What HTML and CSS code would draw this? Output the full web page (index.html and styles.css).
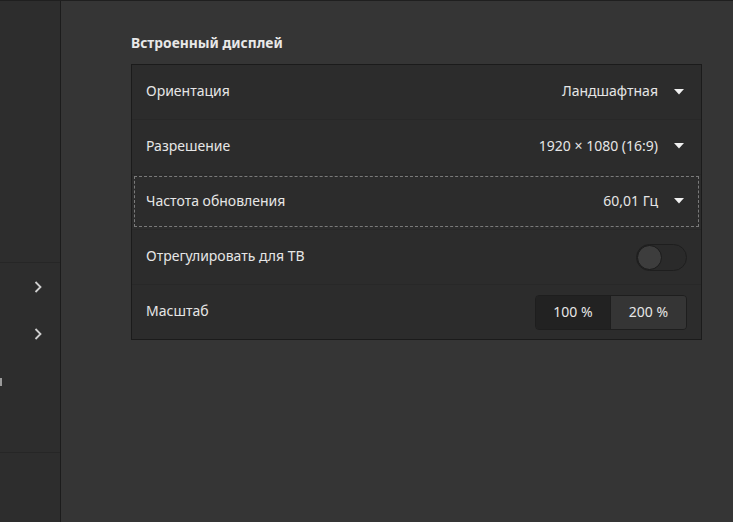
FILE: index.html
```html
<!DOCTYPE html>
<html lang="ru">
<head>
<meta charset="utf-8">
<link rel="stylesheet" href="styles.css">
</head>
<body>
<div class="window">
  <aside class="sidebar">
    <div class="side-top"></div>
    <div class="side-item"><svg class="chev" width="10" height="14" viewBox="0 0 10 14"><path d="M2.5 2 L7.5 7 L2.5 12" fill="none" stroke="#d0d0d0" stroke-width="1.8"/></svg></div>
    <div class="side-item"><svg class="chev" width="10" height="14" viewBox="0 0 10 14"><path d="M2.5 2 L7.5 7 L2.5 12" fill="none" stroke="#d0d0d0" stroke-width="1.8"/></svg></div>
    <div class="side-item short"><span class="sliver"></span></div>
    <div class="side-fill"></div>
    <div class="side-bottom"></div>
  </aside>
  <main class="main">
    <h2 class="heading">Встроенный дисплей</h2>
    <div class="card">
      <div class="row">
        <span class="label">Ориентация</span>
        <span class="value">Ландшафтная<svg class="arrow" width="10" height="6" viewBox="0 0 10 6"><path d="M0 0 H10 L5 5.5 Z" fill="#f0f0f0"/></svg></span>
      </div>
      <div class="row">
        <span class="label">Разрешение</span>
        <span class="value">1920 × 1080 (16:9)<svg class="arrow" width="10" height="6" viewBox="0 0 10 6"><path d="M0 0 H10 L5 5.5 Z" fill="#f0f0f0"/></svg></span>
      </div>
      <div class="row focused">
        <span class="label">Частота обновления</span>
        <span class="value">60,01 Гц<svg class="arrow" width="10" height="6" viewBox="0 0 10 6"><path d="M0 0 H10 L5 5.5 Z" fill="#f0f0f0"/></svg></span>
      </div>
      <div class="row">
        <span class="label">Отрегулировать для ТВ</span>
        <span class="switch"><span class="knob"></span></span>
      </div>
      <div class="row">
        <span class="label">Масштаб</span>
        <span class="linked">
          <span class="seg active">100 %</span>
          <span class="seg">200 %</span>
        </span>
      </div>
    </div>
  </main>
</div>
</body>
</html>
```
FILE: styles.css
```css
* { box-sizing: border-box; }
html, body { margin: 0; padding: 0; }
body {
  width: 733px;
  height: 522px;
  overflow: hidden;
  background: #353535;
  font-family: "Noto Sans", "Open Sans", sans-serif;
  color: #ececec;
}
.window {
  display: flex;
  height: 522px;
  border-top: 1px solid #1f1f1f;
}
.sidebar {
  width: 61px;
  flex: none;
  background: #2d2d2d;
  border-right: 1px solid #1c1c1c;
  display: flex;
  flex-direction: column;
}
.side-top {
  height: 262px;
  border-bottom: 1px solid #262626;
}
.side-item {
  height: 47px;
  display: flex;
  align-items: center;
  justify-content: flex-end;
  padding-right: 17px;
}
.side-item.short {
  height: 48px;
  justify-content: flex-start;
  padding: 0;
}
.sliver {
  display: block;
  width: 2px;
  height: 8px;
  background: #9a9a9a;
  margin-top: 2px;
}
.side-fill {
  flex: none;
  height: 47px;
}
.side-bottom {
  flex: 1;
  border-top: 1px solid #262626;
}
.main {
  flex: 1;
  padding: 33px 31px 0 70px;
}
.heading {
  margin: 0 0 12px 0;
  font-size: 13.8px;
  font-weight: 700;
  line-height: 18px;
  color: #e8e8e8;
}
.card {
  background: #2c2c2c;
  border: 1px solid #1b1b1b;
  display: flex;
  flex-direction: column;
}
.row {
  height: 55px;
  display: flex;
  align-items: center;
  justify-content: space-between;
  padding: 0 14px 4px 14px;
  font-size: 14px;
  border-top: 1px solid #282828;
}
.row:first-child { border-top: none; height: 54px; padding-bottom: 3px; }
.row.focused {
  outline: 1px dashed #7a7a7a;
  outline-offset: -3px;
}
.label { color: #e6e6e6; }
.value {
  display: flex;
  align-items: center;
  color: #e6e6e6;
}
.arrow { margin-left: 16px; margin-right: 3px; margin-top: 2px; }
.switch {
  width: 51px;
  height: 27px;
  border-radius: 14px;
  background: #2a2a2a;
  border: 1px solid #1e1e1e;
  position: relative;
  display: block;
  margin-top: 4px;
}
.knob {
  position: absolute;
  left: 0;
  top: 0;
  width: 25px;
  height: 25px;
  border-radius: 50%;
  background: #3d3d3d;
  border: 1px solid #1b1b1b;
}
.linked {
  display: flex;
  height: 35px;
  border: 1px solid #1e1e1e;
  border-radius: 4px;
  overflow: hidden;
  margin-top: 4px;
}
.seg {
  width: 75px;
  display: flex;
  align-items: center;
  justify-content: center;
  background: #353535;
  color: #e6e6e6;
  font-size: 14px;
  padding-bottom: 2px;
}
.seg.active {
  background: #222222;
  border-right: 1px solid #1e1e1e;
}
```
